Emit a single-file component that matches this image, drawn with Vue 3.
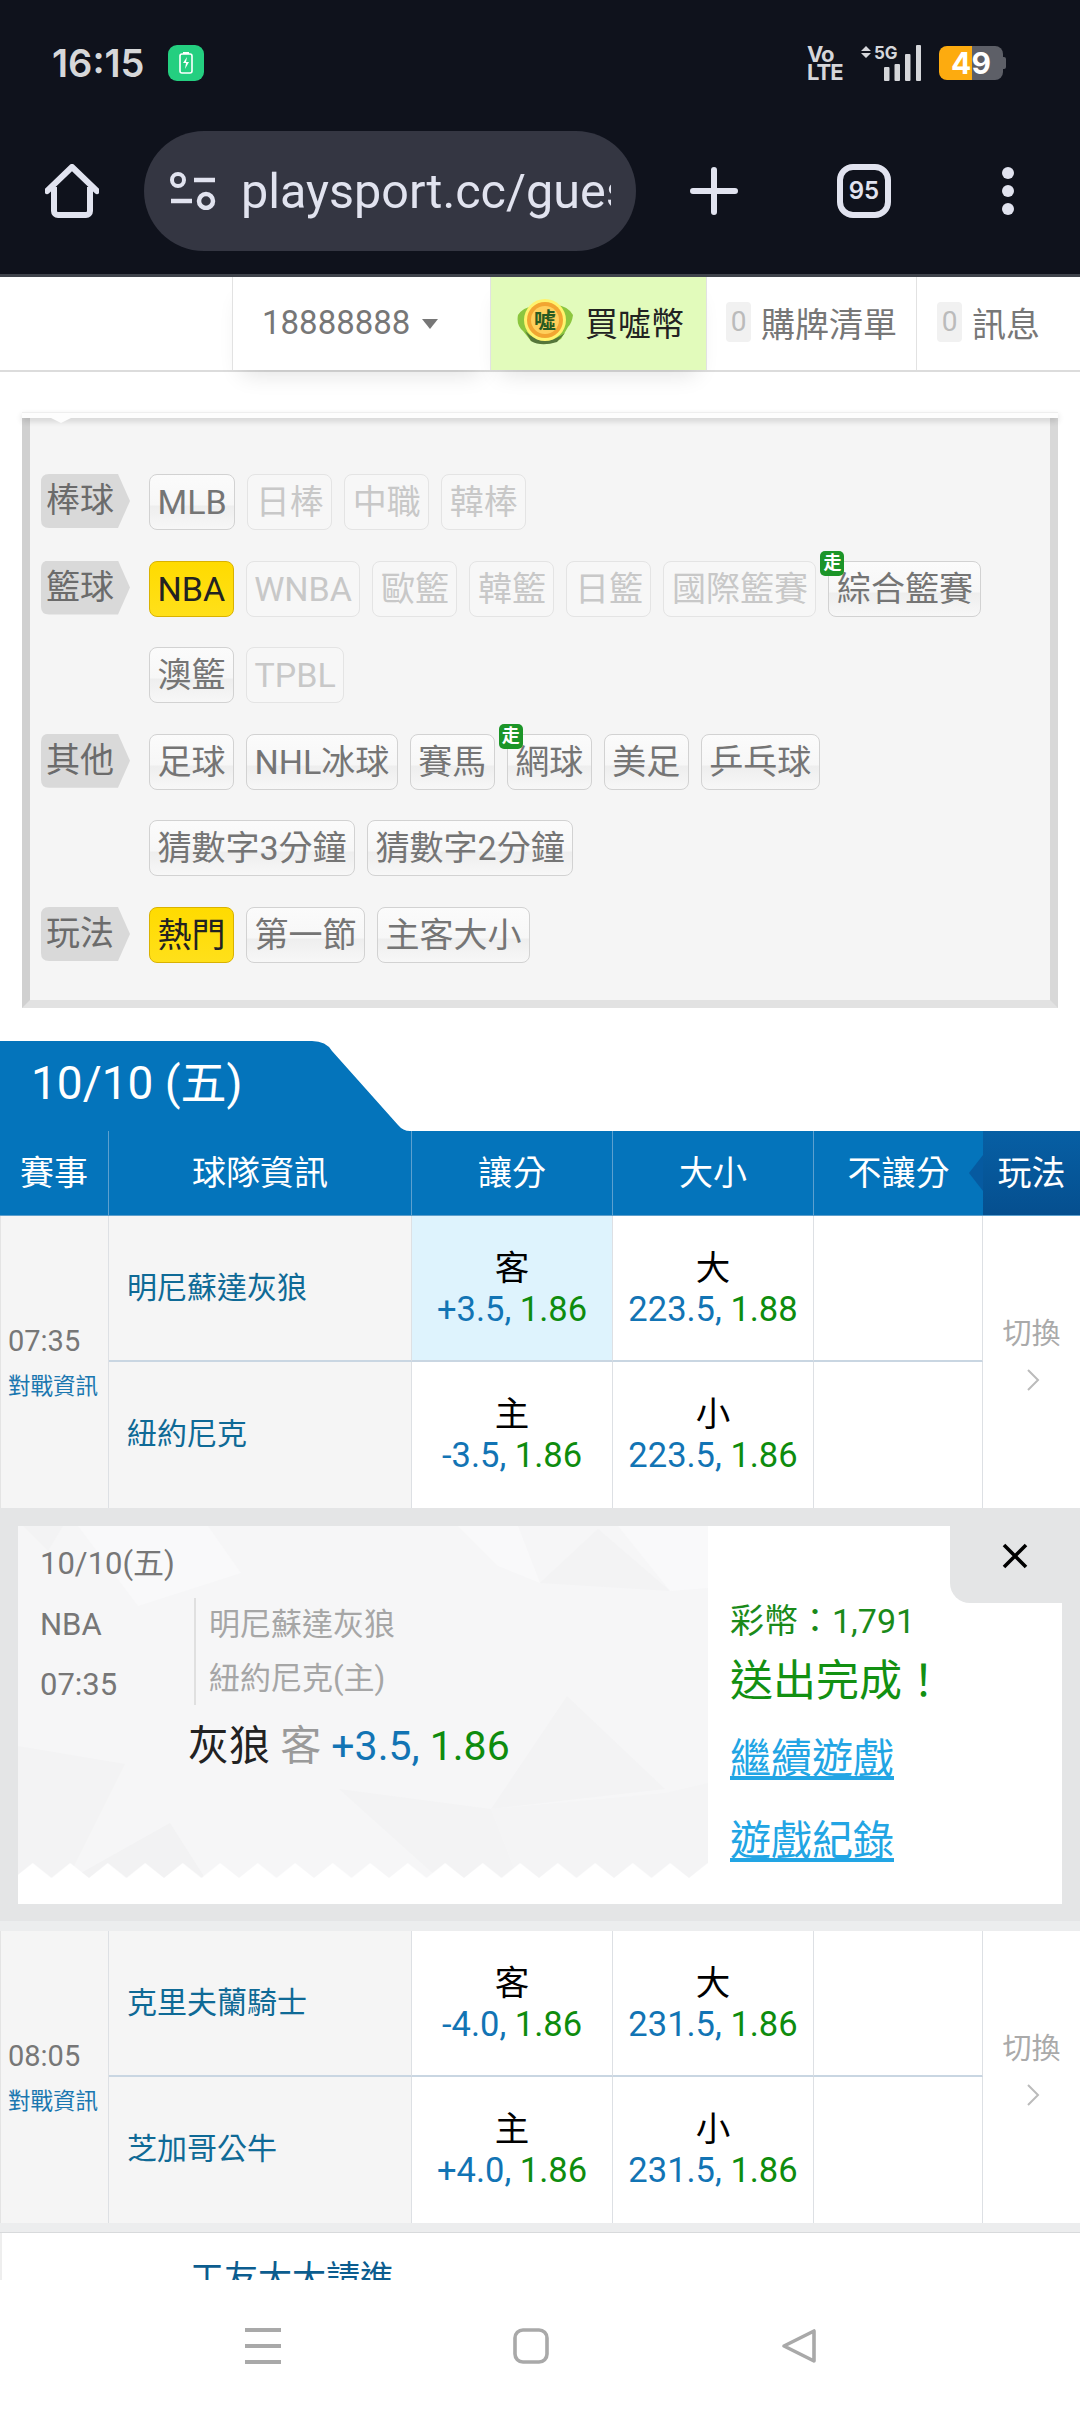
<template>
  <div class="phone">
    <div class="statusbar">
      <span class="clock">16:15</span>
      <span class="charge">
        <svg width="36" height="36" viewBox="0 0 36 36">
          <rect x="12" y="9" width="12" height="19" rx="2" fill="none" stroke="#fff" stroke-width="1.6" />
          <rect x="15" y="7" width="6" height="2" fill="#fff" />
          <path d="M19 12l-4 6h3l-1 6 4-7h-3z" fill="#fff" />
        </svg>
      </span>
      <span class="status-right">
        <span class="volte">Vo<br />LTE</span>
        <svg class="signal" width="60" height="36" viewBox="0 0 60 36">
          <path d="M5 1l5 5H0zM5 13l5-5H0z" fill="#d5d6da" />
          <text x="13" y="14" class="fiveg">5G</text>
          <rect x="23" y="22" width="5.5" height="14" rx="1" fill="#d5d6da" />
          <rect x="33.5" y="19" width="5.5" height="17" rx="1" fill="#d5d6da" />
          <rect x="44" y="9" width="5.5" height="27" rx="1" fill="#d5d6da" />
          <rect x="55" y="0" width="5" height="36" rx="1" fill="#d5d6da" />
        </svg>
        <span class="battery">49</span>
      </span>
    </div>

    <div class="toolbar">
      <svg class="home" width="54" height="54" viewBox="0 0 54 54">
        <path d="M2 27L27 3l25 24" fill="none" stroke="#e1e3ef" stroke-width="6" stroke-linecap="round" stroke-linejoin="round" />
        <path d="M9 23v24a4 4 0 0 0 4 4h28a4 4 0 0 0 4-4V23" fill="none" stroke="#e1e3ef" stroke-width="6" />
      </svg>
      <div class="urlbar">
        <svg width="46" height="38" viewBox="0 0 46 38">
          <circle cx="8" cy="8" r="6" fill="none" stroke="#e1e3ef" stroke-width="4" />
          <path d="M24 8h21M1 29h21" stroke="#e1e3ef" stroke-width="4.5" />
          <circle cx="36" cy="29" r="7" fill="none" stroke="#e1e3ef" stroke-width="4.5" />
        </svg>
        <span class="url">playsport.cc/guess</span>
      </div>
      <svg class="plus" width="48" height="48" viewBox="0 0 48 48">
        <path d="M24 3v42M3 24h42" stroke="#e1e3ef" stroke-width="6" stroke-linecap="round" />
      </svg>
      <span class="tabs">95</span>
      <span class="dots"><i></i><i></i><i></i></span>
    </div>

    <div class="content">
      <div class="sitebar">
        <div class="cell user">18888888<span class="caret"></span></div>
        <div class="cell buy">
          <svg width="60" height="46" viewBox="0 0 60 46">
            <path d="M3 16q6-9 16-8l22-2q12 1 17 10-1 8-5 12l-7 12q-14 8-30 2L8 32Q1 26 3 16z" fill="#8cc63f" />
            <path d="M10 32q18 18 40 2l-8 9q-16 5-26-1z" fill="#55763a" />
            <circle cx="30" cy="21" r="21" fill="#fff36e" />
            <circle cx="30" cy="21" r="18" fill="#f2a531" />
            <circle cx="30" cy="21" r="14" fill="#ffcf5c" />
            <text x="30" y="29" text-anchor="middle" class="coin">噓</text>
          </svg>
          <span>買噓幣</span>
        </div>
        <div class="cell count"><em>0</em>購牌清單</div>
        <div class="cell count last"><em>0</em>訊息</div>
      </div>

      <div class="filter">
        <div v-for="g in groups" :key="g.label" class="filter-row">
          <span class="tag">{{ g.label }}</span>
          <div class="chips">
            <span
              v-for="c in g.items"
              :key="c.t"
              class="chip"
              :class="{ off: c.off, on: c.on }"
            >{{ c.t }}<b v-if="c.walk" class="walk">走</b></span>
          </div>
        </div>
      </div>

      <div class="datetab">10/10 (五)</div>
      <div class="thead">
        <span>賽事</span>
        <span>球隊資訊</span>
        <span>讓分</span>
        <span>大小</span>
        <span>不讓分</span>
        <span class="mode">玩法</span>
      </div>

      <div class="game">
        <div class="g-time"><span>07:35</span><a>對戰資訊</a></div>
        <div class="g-team">明尼蘇達灰狼</div>
        <div class="g-odd picked">客<p><u>+3.5,</u> <s>1.86</s></p></div>
        <div class="g-odd">大<p><u>223.5,</u> <s>1.88</s></p></div>
        <div class="g-empty"></div>
        <div class="g-switch">切換
          <svg width="14" height="22" viewBox="0 0 14 22"><path d="M2 1l10 10L2 21" fill="none" stroke="#bbb" stroke-width="2" /></svg>
        </div>
        <div class="g-team low">紐約尼克</div>
        <div class="g-odd low">主<p><u>-3.5,</u> <s>1.86</s></p></div>
        <div class="g-odd low">小<p><u>223.5,</u> <s>1.86</s></p></div>
        <div class="g-empty low"></div>
      </div>

      <div class="ticket-wrap">
        <div class="ticket">
          <div class="t-left">
            <svg class="t-bg" width="690" height="352" viewBox="0 0 690 352">
              <defs>
                <pattern id="teeth" width="37.5" height="15" patternUnits="userSpaceOnUse" x="-4" y="337">
                  <path d="M0 15L18.7 0l18.8 15z" fill="#fff" />
                </pattern>
              </defs>
              <polygon points="60,0 190,0 223,47 120,80" fill="#f9f9fa" />
              <polygon points="5,0 45,0 30,25" fill="#f3f3f4" />
              <polygon points="522,57 580,3 652,65" fill="#f3f3f4" />
              <polygon points="440,0 500,0 522,57 480,40" fill="#f9f9fa" />
              <polygon points="600,0 690,0 690,62 652,65" fill="#f9f9fa" />
              <polygon points="0,220 107,238 50,352 0,352" fill="#f3f3f4" />
              <polygon points="549,170 647,263 473,283" fill="#f3f3f4" />
              <polygon points="321,263 473,283 500,352 420,352" fill="#f3f3f4" />
              <polygon points="473,283 647,267 690,257 690,352 500,352" fill="#f4f4f5" />
              <polygon points="152,297 54,352 187,352" fill="#f2f2f3" />
              <rect y="337" width="690" height="15" fill="url(#teeth)" />
            </svg>
            <div class="t-date">10/10(五)</div>
            <div class="t-match">
              <div class="t-meta"><p>NBA</p><p>07:35</p></div>
              <div class="t-teams"><p>明尼蘇達灰狼</p><p>紐約尼克(主)</p></div>
            </div>
            <div class="t-pick">灰狼 <span class="grey">客</span> <u>+3.5,</u> <s>1.86</s></div>
          </div>
          <div class="t-right">
            <div class="coins">彩幣：1,791</div>
            <div class="done">送出完成！</div>
            <a class="link first">繼續遊戲</a>
            <a class="link second">遊戲紀錄</a>
          </div>
          <div class="close">
            <svg width="26" height="26" viewBox="0 0 26 26">
              <path d="M2 2l22 22M24 2L2 24" stroke="#000" stroke-width="3.6" />
            </svg>
          </div>
        </div>
      </div>
      <div class="band"></div>

      <div class="game">
        <div class="g-time"><span>08:05</span><a>對戰資訊</a></div>
        <div class="g-team">克里夫蘭騎士</div>
        <div class="g-odd">客<p><u>-4.0,</u> <s>1.86</s></p></div>
        <div class="g-odd">大<p><u>231.5,</u> <s>1.86</s></p></div>
        <div class="g-empty"></div>
        <div class="g-switch">切換
          <svg width="14" height="22" viewBox="0 0 14 22"><path d="M2 1l10 10L2 21" fill="none" stroke="#bbb" stroke-width="2" /></svg>
        </div>
        <div class="g-team low">芝加哥公牛</div>
        <div class="g-odd low">主<p><u>+4.0,</u> <s>1.86</s></p></div>
        <div class="g-odd low">小<p><u>231.5,</u> <s>1.86</s></p></div>
        <div class="g-empty low"></div>
      </div>
      <div class="band end"></div>
      <div class="notice">工友大大請進</div>
    </div>

    <div class="navbar">
      <svg width="36" height="36" viewBox="0 0 36 36">
        <path d="M0 2h36M0 18h36M0 34h36" stroke="#a9a9a9" stroke-width="4" />
      </svg>
      <svg width="36" height="36" viewBox="0 0 36 36">
        <rect x="2" y="2" width="32" height="32" rx="8" fill="none" stroke="#a9a9a9" stroke-width="3.6" />
      </svg>
      <svg width="36" height="36" viewBox="0 0 36 36">
        <path d="M33 3v30L3 18z" fill="none" stroke="#a9a9a9" stroke-width="3.6" stroke-linejoin="round" />
      </svg>
    </div>
  </div>
</template>

<script setup>
const groups = [
  {
    label: '棒球',
    items: [
      { t: 'MLB' },
      { t: '日棒', off: true },
      { t: '中職', off: true },
      { t: '韓棒', off: true }
    ]
  },
  {
    label: '籃球',
    items: [
      { t: 'NBA', on: true },
      { t: 'WNBA', off: true },
      { t: '歐籃', off: true },
      { t: '韓籃', off: true },
      { t: '日籃', off: true },
      { t: '國際籃賽', off: true },
      { t: '綜合籃賽', walk: true },
      { t: '澳籃' },
      { t: 'TPBL', off: true }
    ]
  },
  {
    label: '其他',
    items: [
      { t: '足球' },
      { t: 'NHL冰球' },
      { t: '賽馬' },
      { t: '網球', walk: true },
      { t: '美足' },
      { t: '乒乓球' },
      { t: '猜數字3分鐘' },
      { t: '猜數字2分鐘' }
    ]
  },
  {
    label: '玩法',
    items: [
      { t: '熱門', on: true },
      { t: '第一節' },
      { t: '主客大小' }
    ]
  }
];
</script>

<style>
html, body { margin: 0; background: #fff; }
</style>

<style scoped>
.phone {
  width: 1080px;
  height: 2412px;
  display: flex;
  flex-direction: column;
  overflow: hidden;
  background: #fff;
  font-family: Roboto, "Noto Sans CJK TC", sans-serif;
  color: #666;
}

/* status + browser chrome */
.statusbar {
  height: 125px;
  flex: none;
  box-sizing: border-box;
  padding: 0 77px 0 52px;
  display: flex;
  align-items: center;
  background: #0f121c;
}
.clock { font: 600 38px Inter, sans-serif; color: #d6d7d9; }
.charge {
  margin-left: 24px;
  width: 36px;
  height: 36px;
  border-radius: 9px;
  background: #24cf80;
}
.charge svg { display: block; }
.status-right { margin-left: auto; display: flex; align-items: center; }
.volte { font: 700 22px/18px Inter, sans-serif; color: #d5d6da; width: 34px; letter-spacing: -1px; }
.signal { margin-left: 20px; }
.fiveg { font: 700 17px Inter, sans-serif; fill: #d5d6da; }
.battery {
  margin-left: 18px;
  width: 64px;
  height: 34px;
  position: relative;
  border-radius: 8px;
  background: linear-gradient(90deg, #fdab0f 33px, #5d5f67 33px);
  color: #fff;
  font: 700 30px/34px Inter, sans-serif;
  text-align: center;
}
.battery::after {
  content: "";
  position: absolute;
  right: -3px;
  top: 11px;
  width: 3px;
  height: 12px;
  border-radius: 0 2px 2px 0;
  background: #5d5f67;
}
.toolbar {
  height: 149px;
  flex: none;
  box-sizing: border-box;
  padding: 6px 0 0 45px;
  display: flex;
  align-items: flex-start;
  background: #0f121c;
}
.home { margin-top: 33px; }
.urlbar {
  margin-left: 45px;
  width: 492px;
  height: 120px;
  box-sizing: border-box;
  padding: 0 25px 0 26px;
  display: flex;
  align-items: center;
  gap: 25px;
  border-radius: 60px;
  background: #343642;
}
.urlbar svg { flex: none; }
.url {
  font-size: 48.5px;
  color: #e1e3ef;
  white-space: nowrap;
  overflow: hidden;
}
.plus { margin: 36px 0 0 54px; }
.tabs {
  margin: 33px 0 0 99px;
  width: 54px;
  height: 54px;
  box-sizing: border-box;
  border: 6px solid #e1e3ef;
  border-radius: 16px;
  text-align: center;
  color: #e1e3ef;
  font: 600 24px/42px Inter, sans-serif;
}
.dots { margin: 36px 0 0 111px; display: flex; flex-direction: column; gap: 6px; }
.dots i { width: 12px; height: 12px; border-radius: 50%; background: #e1e3ef; }

.content { flex: 1; min-height: 0; overflow: hidden; border-top: 3px solid #3f434b; }

/* site header */
.sitebar {
  height: 93px;
  display: flex;
  justify-content: flex-end;
  border-bottom: 2px solid #dcdcdc;
}
.cell {
  display: flex;
  align-items: center;
  box-sizing: border-box;
  padding-bottom: 3px;
  font-size: 34px;
  color: #777;
  border-left: 1px solid #e2e2e2;
}
.user {
  width: 258px;
  padding-left: 29px;
  font-size: 33px;
  box-shadow: 0 14px 22px -10px rgba(0, 0, 0, 0.12);
}
.caret {
  margin-left: 12px;
  margin-top: 3px;
  border: 8px solid transparent;
  border-top: 10px solid #777;
  border-bottom: 0;
}
.buy {
  width: 216px;
  padding-left: 24px;
  gap: 10px;
  background: #e2fbbb;
  color: #222;
  font-size: 33px;
  box-shadow: 0 14px 22px -10px rgba(0, 0, 0, 0.12);
}
.coin { font: 700 22px "Noto Sans CJK TC", sans-serif; fill: #2a5a22; }
.count { width: 210px; padding-left: 19px; }
.count.last { width: 164px; padding-left: 20px; }
.count em {
  margin-right: 10px;
  width: 25px;
  height: 40px;
  border-radius: 4px;
  background: #f1f1f1;
  color: #bbb;
  font-style: normal;
  font-size: 28px;
  line-height: 40px;
  text-align: center;
}

/* league filter */
.filter {
  position: relative;
  margin: 40px 22px 0;
  box-sizing: border-box;
  height: 596px;
  padding: 62px 11px 0;
  display: flex;
  flex-direction: column;
  gap: 30.6px;
  background: #f5f5f5;
  border-style: solid;
  border-width: 0 8px 8px;
  border-color: #d0d0d0 #d8d8d8 #e2e2e2 #d0d0d0;
}
.filter::before {
  content: "";
  position: absolute;
  left: -8px;
  right: -8px;
  top: 0;
  height: 5px;
  background: #fdfdfd;
  border-top: 1px solid #eee;
  box-shadow: 0 3px 6px rgba(0, 0, 0, 0.16);
}
.filter::after {
  content: "";
  position: absolute;
  left: 21px;
  top: 6px;
  border: 10px solid transparent;
  border-top: 5px solid #fdfdfd;
  border-bottom: 0;
}
.filter-row { display: flex; gap: 19px; align-items: flex-start; }
.tag {
  flex: none;
  width: 89px;
  height: 54px;
  box-sizing: border-box;
  padding-left: 5px;
  background: #d9d9d9;
  clip-path: path("M8 0H77L89 27L77 54H8Q0 54 0 46V8Q0 0 8 0Z");
  font-size: 34px;
  line-height: 53px;
  color: #6b6b6b;
}
.chips { display: flex; flex-wrap: wrap; gap: 30.6px 12px; width: 870px; }
.chip {
  position: relative;
  height: 56px;
  box-sizing: border-box;
  padding: 0 7.5px;
  border: 1px solid #d2d2d2;
  border-radius: 8px;
  background: linear-gradient(#fbfbfb, #f7f7f7 55%, #eeeeee 58%, #f7f7f7);
  font-size: 34px;
  line-height: 54px;
  color: #757575;
  white-space: nowrap;
}
.chip.off {
  border-color: #e4e4e4;
  background: #f7f7f7;
  color: #c8c8c8;
}
.chip.on {
  border-color: #d9b200;
  background: linear-gradient(#ffdb00, #ffe01a);
  color: #222;
}
.walk {
  position: absolute;
  left: -9px;
  top: -11px;
  width: 24px;
  height: 25px;
  border-radius: 5px;
  background: #1c9528;
  color: #fff;
  font-size: 18px;
  line-height: 24px;
  text-align: center;
}

/* games table */
.datetab {
  margin-top: 33px;
  width: 410px;
  height: 90px;
  box-sizing: border-box;
  padding: 15px 0 0 31px;
  background: #0474bb;
  clip-path: path("M0 0H312Q326 0 332 10L398 84Q403 90 410 90H0Z");
  color: #fff;
  font-size: 46px;
  line-height: 54px;
}
.thead {
  display: grid;
  grid-template-columns: 109px 303px 201px 201px 169px 97px;
  height: 85px;
  background: #0474bb;
  border-bottom: 1px solid #5d9fcc;
  box-sizing: border-box;
  color: #fff;
  font-size: 34px;
  line-height: 84px;
  text-align: center;
}
.thead span { border-right: 1px solid #5ca0cf; box-sizing: border-box; }
.thead span:nth-child(5) { border-right: 0; }
.thead .mode {
  position: relative;
  border-right: 0;
  background: linear-gradient(#075fa4, #054f8f);
}
.thead .mode::before {
  content: "";
  position: absolute;
  left: -14px;
  top: 24px;
  border: 18px solid transparent;
  border-right: 14px solid #065aa0;
  border-left: 0;
}
.game {
  display: grid;
  grid-template-columns: 109px 303px 201px 201px 169px 97px;
  grid-template-rows: 146px 146px;
}
.g-time {
  grid-row: 1 / 3;
  box-sizing: border-box;
  padding: 100px 0 0 7px;
  background: #f5f5f5;
  border-left: 1px solid #e4e4e4;
  border-right: 1px solid #dde0e4;
  font-size: 29px;
  color: #777;
}
.g-time span { display: block; line-height: 50px; }
.g-time a {
  display: block;
  margin-top: 5px;
  font-size: 22.5px;
  line-height: 30px;
  color: #1a77b0;
  white-space: nowrap;
}
.g-team {
  box-sizing: border-box;
  padding-left: 18px;
  background: #f5f5f5;
  border-right: 1px solid #dde0e4;
  border-bottom: 2px solid #c9d6e2;
  color: #0f6a96;
  font-size: 30px;
  line-height: 144px;
}
.g-odd {
  box-sizing: border-box;
  padding-top: 30px;
  border-right: 1px solid #dde0e4;
  border-bottom: 2px solid #c9d6e2;
  color: #000;
  font-size: 34.5px;
  line-height: 44px;
  text-align: center;
}
.g-odd p { margin: 0; line-height: 38px; white-space: nowrap; }
.picked { background: #def3fd; }
u { text-decoration: none; color: #1274b4; }
s { text-decoration: none; color: #0e8c0e; }
.g-empty { border-bottom: 2px solid #c9d6e2; border-right: 1px solid #dde0e4; }
.low { border-bottom: 0; }
.g-switch {
  grid-column: 6;
  grid-row: 1 / 3;
  box-sizing: border-box;
  padding-top: 98px;
  font-size: 29px;
  line-height: 40px;
  color: #aaa;
  text-align: center;
}
.g-switch svg { display: block; margin: 15px 0 0 43px; }

/* ticket */
.ticket-wrap { background: #e4e5e6; padding: 18px 18px 17px; }
.ticket {
  position: relative;
  height: 378px;
  display: flex;
  background: #fff;
}
.t-left {
  position: relative;
  width: 690px;
  height: 352px;
  box-sizing: border-box;
  padding: 18px 0 0 22px;
  background: #f6f6f7;
  font-size: 31px;
  color: #777;
}
.t-bg { position: absolute; left: 0; top: 0; }
.t-date, .t-match, .t-pick { position: relative; }
.t-date { line-height: 40px; }
.t-match { display: flex; margin-top: 14px; height: 107px; }
.t-meta { width: 154px; border-right: 2px solid #e0e0e0; margin-right: 13px; }
.t-meta p { margin: -3px 0 3px; line-height: 60px; }
.t-teams { color: #a6a6a6; }
.t-teams p { margin: 0; line-height: 54px; }
.t-pick {
  margin: 16px 0 0 148px;
  font-size: 41px;
  line-height: 50px;
  color: #222;
}
.grey { color: #9a9a9a; }
.t-right { padding: 73px 0 0 22px; flex: 1; }
.coins { font-size: 34px; line-height: 44px; color: #1a8a1a; }
.done { margin-top: 8px; font-size: 43px; line-height: 60px; color: #129012; }
.link {
  display: table;
  font-size: 41px;
  line-height: 54px;
  color: #22a5e4;
  text-decoration: underline;
}
.link.first { margin-top: 21px; }
.link.second { margin-top: 28px; }
.close {
  position: absolute;
  right: 0;
  top: 0;
  width: 112px;
  height: 77px;
  box-sizing: border-box;
  padding: 17px 0 0 52px;
  background: #e4e5e6;
  border-bottom-left-radius: 20px;
}
.close svg { display: block; }
.band { height: 10px; background: #ecedee; }
.band.end { height: 9px; border-bottom: 1px solid #d8dadc; }
.notice {
  padding: 23px 0 0 188px;
  border-left: 2px solid #eee;
  font-size: 34px;
  line-height: 44px;
  color: #0c5d8f;
}

.navbar {
  height: 132px;
  flex: none;
  box-sizing: border-box;
  display: flex;
  align-items: center;
  gap: 232px;
  padding-left: 245px;
  background: #fff;
}
</style>
